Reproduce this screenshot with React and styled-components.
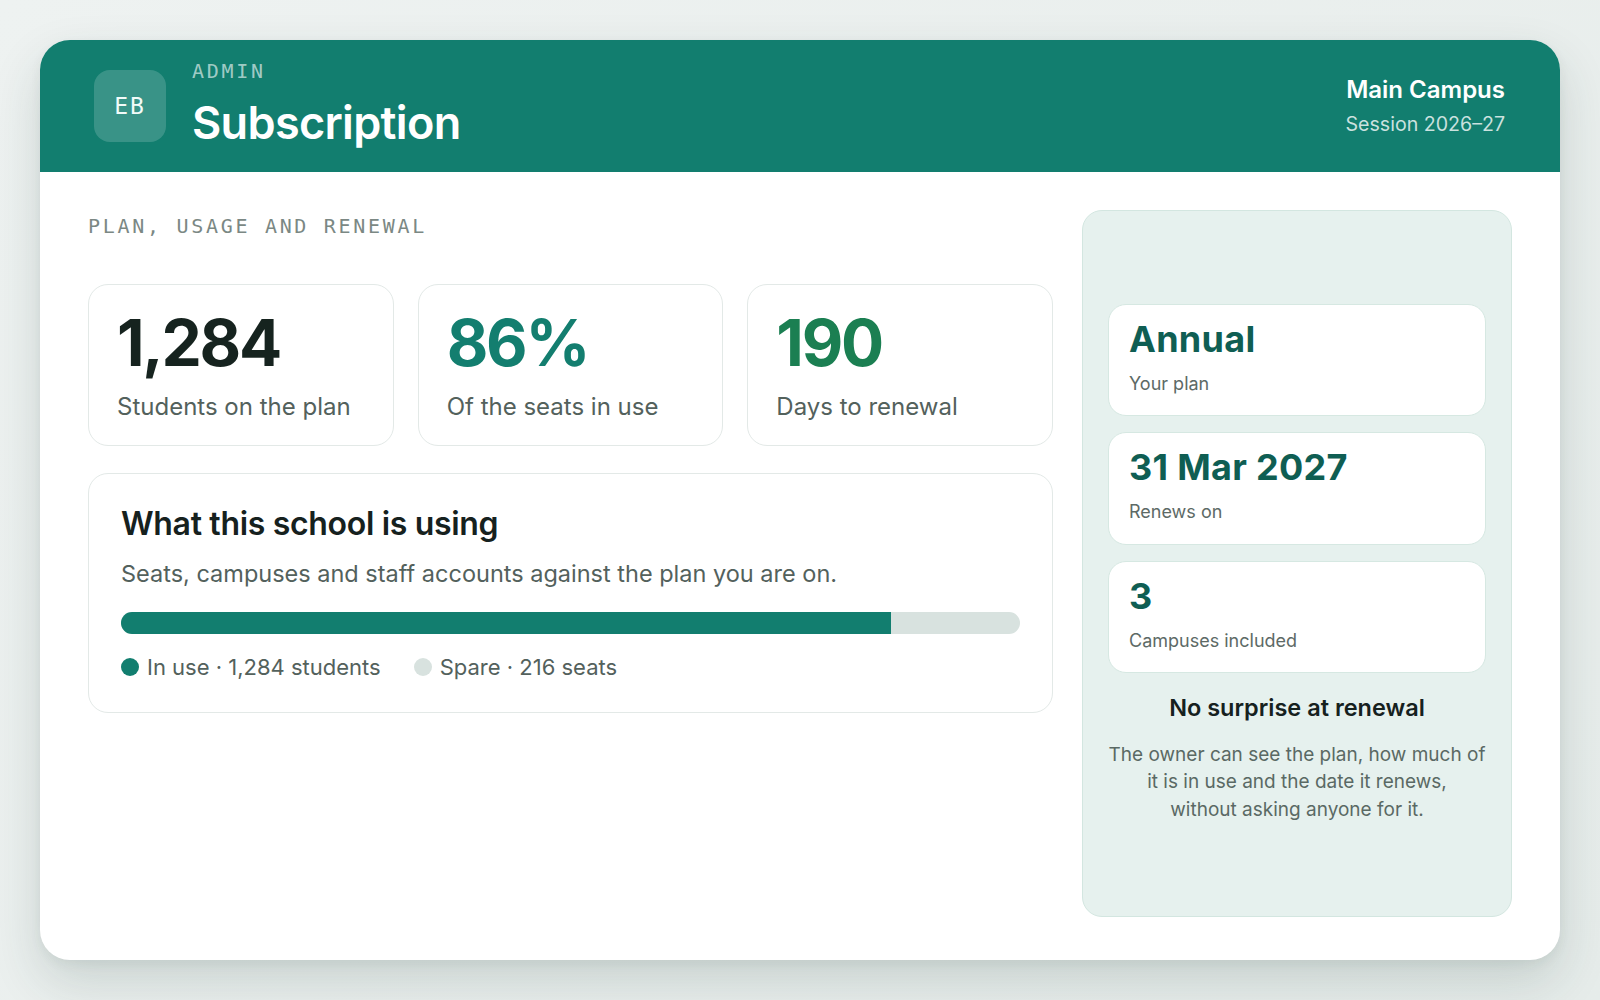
import React from 'react';
import styled, { createGlobalStyle } from 'styled-components';

const GlobalStyle = createGlobalStyle`
  * { box-sizing: border-box; }
  html, body { margin: 0; padding: 0; }
  body {
    background: linear-gradient(135deg, #eef2f1 0%, #e6ecea 100%);
    font-family: Inter, "Noto Sans", sans-serif;
    color: #16211e;
  }
`;

const Page = styled.div`
  height: 100vh;
  padding: 40px;
  display: flex;
`;

const Card = styled.div`
  flex: 1;
  display: flex;
  flex-direction: column;
  background: #fff;
  border-radius: 30px;
  overflow: hidden;
  box-shadow: 0 22px 50px rgba(30, 60, 55, 0.16), 0 4px 12px rgba(30, 60, 55, 0.06);
`;

const Header = styled.header`
  height: 132px;
  flex-shrink: 0;
  background: #127e6f;
  padding: 0 55px 0 54px;
  display: flex;
  align-items: center;
  justify-content: space-between;
  color: #fff;
`;

const Brand = styled.div`
  display: flex;
  align-items: center;
  gap: 26px;
`;

const Avatar = styled.div`
  width: 72px;
  height: 72px;
  border-radius: 16px;
  background: rgba(255, 255, 255, 0.17);
  display: flex;
  align-items: center;
  justify-content: center;
  font-family: "DejaVu Sans Mono", "Liberation Mono", monospace;
  font-size: 23px;
  letter-spacing: 2px;
  color: #f2fbf9;
`;

const TitleBlock = styled.div`
  display: flex;
  flex-direction: column;
  gap: 14px;
  padding-bottom: 5px;
`;

const Eyebrow = styled.div`
  font-family: "DejaVu Sans Mono", "Liberation Mono", monospace;
  font-size: 20px;
  line-height: 1.2;
  letter-spacing: 0.135em;
  color: ${p => p.color || '#7b8884'};
`;

const Title = styled.h1`
  margin: 0;
  font-size: 45px;
  line-height: 1.15;
  font-weight: 600;
  letter-spacing: -0.015em;
`;

const Campus = styled.div`
  text-align: right;
  display: flex;
  flex-direction: column;
  gap: 7px;
  padding-bottom: 1px;
`;

const CampusName = styled.div`
  font-size: 24px;
  line-height: 1.3;
  font-weight: 600;
`;

const Session = styled.div`
  font-size: 19.6px;
  line-height: 1.3;
  color: rgba(255, 255, 255, 0.78);
`;

const Body = styled.main`
  flex: 1;
  padding: 38px 48px 43px;
  display: grid;
  grid-template-columns: 1fr 430px;
  gap: 29px;
`;

const Main = styled.section`
  display: flex;
  flex-direction: column;
`;

const SectionLabel = styled(Eyebrow)`
  margin-top: 4px;
  margin-bottom: 46px;
`;

const Stats = styled.div`
  display: grid;
  grid-template-columns: repeat(3, 1fr);
  gap: 24px;
  margin-bottom: 27px;
`;

const Panel = styled.div`
  background: #fff;
  border: 1px solid #e3e9e7;
  border-radius: 20px;
`;

const StatCard = styled(Panel)`
  padding: 26px 28px 23px;
  display: flex;
  flex-direction: column;
  gap: 16px;
`;

const StatValue = styled.div`
  font-size: 64px;
  line-height: 1;
  font-weight: 700;
  letter-spacing: -0.035em;
  color: ${p => p.color};
`;

const StatLabel = styled.div`
  font-size: 24px;
  line-height: 1.3;
  color: #53615c;
`;

const UsageCard = styled(Panel)`
  padding: 31px 32px 30px;
`;

const UsageTitle = styled.h2`
  margin: 0 0 14px;
  font-size: 32px;
  line-height: 1.2;
  font-weight: 600;
  letter-spacing: -0.01em;
`;

const UsageText = styled.p`
  margin: 0 0 22px;
  font-size: 23.5px;
  line-height: 1.4;
  color: #53615c;
`;

const Track = styled.div`
  height: 22px;
  border-radius: 11px;
  background: #d8e2df;
  overflow: hidden;
  margin-bottom: 18px;
`;

const Fill = styled.div`
  height: 100%;
  background: #127e6f;
`;

const Legend = styled.div`
  display: flex;
  gap: 33px;
`;

const LegendItem = styled.div`
  display: flex;
  align-items: center;
  gap: 8px;
  font-size: 22px;
  line-height: 30px;
  color: #53615c;
`;

const Dot = styled.span`
  width: 18px;
  height: 18px;
  border-radius: 50%;
  background: ${p => p.color};
`;

const Aside = styled.aside`
  background: #e6f1ee;
  border: 1px solid #d3e6e0;
  border-radius: 20px;
  padding: 0 25px;
  display: flex;
  flex-direction: column;
  justify-content: center;
  gap: 16px;
`;

const FactCard = styled.div`
  background: #fff;
  border: 1px solid #d6e8e2;
  border-radius: 18px;
  padding: 13px 20px 19px;
  display: flex;
  flex-direction: column;
  gap: 10px;
`;

const FactValue = styled.div`
  font-size: 36px;
  line-height: 1.2;
  font-weight: 700;
  letter-spacing: 0.008em;
  color: #0f5e53;
`;

const FactLabel = styled.div`
  font-size: 18px;
  line-height: 1.4;
  color: #5d6a66;
`;

const Note = styled.div`
  margin-top: 4px;
  text-align: center;
  display: flex;
  flex-direction: column;
  gap: 17px;
`;

const NoteTitle = styled.h3`
  margin: 0;
  font-size: 23.5px;
  line-height: 1.3;
  font-weight: 600;
  color: #16211e;
`;

const NoteText = styled.p`
  margin: 0;
  font-size: 19px;
  line-height: 27.5px;
  color: #5a6964;
`;

const stats = [
  { value: '1,284', label: 'Students on the plan', color: '#16231f' },
  { value: '86%', label: 'Of the seats in use', color: '#137e6f' },
  { value: '190', label: 'Days to renewal', color: '#1b7f52' },
];

const facts = [
  { value: 'Annual', label: 'Your plan' },
  { value: '31 Mar 2027', label: 'Renews on' },
  { value: '3', label: 'Campuses included' },
];

const used = 1284;
const seats = 1500;

export default function App() {
  return (
    <Page>
      <GlobalStyle />
      <Card>
        <Header>
          <Brand>
            <Avatar>EB</Avatar>
            <TitleBlock>
              <Eyebrow color="rgba(255,255,255,0.62)">ADMIN</Eyebrow>
              <Title>Subscription</Title>
            </TitleBlock>
          </Brand>
          <Campus>
            <CampusName>Main Campus</CampusName>
            <Session>Session 2026–27</Session>
          </Campus>
        </Header>

        <Body>
          <Main>
            <SectionLabel>PLAN, USAGE AND RENEWAL</SectionLabel>
            <Stats>
              {stats.map(s => (
                <StatCard key={s.label}>
                  <StatValue color={s.color}>{s.value}</StatValue>
                  <StatLabel>{s.label}</StatLabel>
                </StatCard>
              ))}
            </Stats>
            <UsageCard>
              <UsageTitle>What this school is using</UsageTitle>
              <UsageText>Seats, campuses and staff accounts against the plan you are on.</UsageText>
              <Track>
                <Fill style={{ width: `${(used / seats) * 100}%` }} />
              </Track>
              <Legend>
                <LegendItem><Dot color="#127e6f" />In use · 1,284 students</LegendItem>
                <LegendItem><Dot color="#d8e2df" />Spare · 216 seats</LegendItem>
              </Legend>
            </UsageCard>
          </Main>

          <Aside>
            {facts.map(f => (
              <FactCard key={f.label}>
                <FactValue>{f.value}</FactValue>
                <FactLabel>{f.label}</FactLabel>
              </FactCard>
            ))}
            <Note>
              <NoteTitle>No surprise at renewal</NoteTitle>
              <NoteText>
                The owner can see the plan, how much of it is in use and the date it renews,<br />
                without asking anyone for it.
              </NoteText>
            </Note>
          </Aside>
        </Body>
      </Card>
    </Page>
  );
}
